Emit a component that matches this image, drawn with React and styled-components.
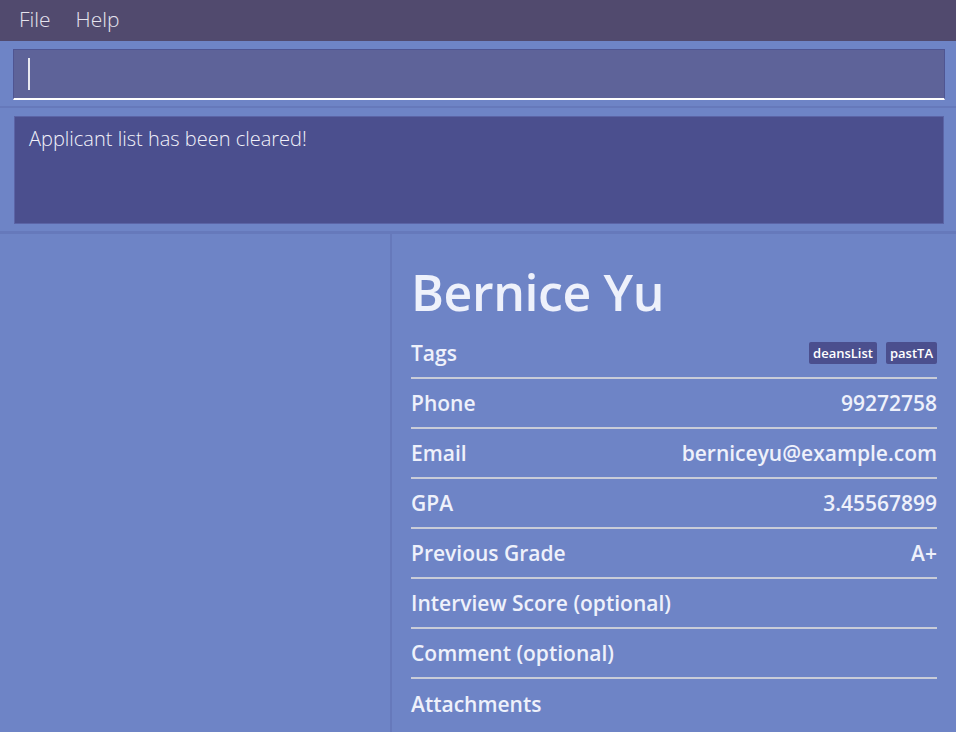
import React from "react";
import styled, { createGlobalStyle } from "styled-components";

const GlobalStyle = createGlobalStyle`
  html, body {
    margin: 0;
    padding: 0;
    background: #6e84c6;
    overflow: hidden;
  }
  * {
    box-sizing: border-box;
  }
`;

const fields = [
  { label: "Phone", value: "99272758" },
  { label: "Email", value: "berniceyu@example.com" },
  { label: "GPA", value: "3.45567899" },
  { label: "Previous Grade", value: "A+" },
  { label: "Interview Score (optional)", value: "" },
  { label: "Comment (optional)", value: "" },
  { label: "Attachments", value: "", last: true },
];

const tags = ["deansList", "pastTA"];

export default function App() {
  return (
    <>
      <GlobalStyle />
      <Window>
        <MenuBar>
          <MenuItem>File</MenuItem>
          <MenuItem>Help</MenuItem>
        </MenuBar>

        <CommandSection>
          <CommandBox>
            <Caret />
          </CommandBox>
        </CommandSection>

        <ResultSection>
          <ResultBox>Applicant list has been cleared!</ResultBox>
        </ResultSection>

        <Main>
          <ListPanel />
          <Divider />
          <DetailPanel>
            <Name>Bernice Yu</Name>
            <Row>
              <Label>Tags</Label>
              <TagList>
                {tags.map((t) => (
                  <Tag key={t}>{t}</Tag>
                ))}
              </TagList>
            </Row>
            {fields.map((f) => (
              <Row key={f.label} last={f.last}>
                <Label>{f.label}</Label>
                <Value>{f.value}</Value>
              </Row>
            ))}
          </DetailPanel>
        </Main>
      </Window>
    </>
  );
}

const Window = styled.div`
  width: 956px;
  height: 732px;
  display: flex;
  flex-direction: column;
  background: #6e84c6;
  font-family: "Open Sans", "Noto Sans", sans-serif;
  color: #eef1fb;
`;

const MenuBar = styled.div`
  height: 41px;
  flex-shrink: 0;
  background: #514a6e;
  display: flex;
  align-items: center;
  gap: 25px;
  padding: 0 0 3px 19px;
`;

const MenuItem = styled.span`
  font-size: 21px;
  font-weight: 300;
  color: #e6e4ee;
`;

const CommandSection = styled.div`
  padding: 8px 11px 6px 13px;
  border-bottom: 2px solid #6679bb;
`;

const CommandBox = styled.div`
  height: 51px;
  background: #5e6399;
  border: 1px solid #4f5592;
  border-bottom: 2px solid #ffffff;
  display: flex;
  align-items: center;
  padding-left: 14px;
`;

const Caret = styled.div`
  width: 2px;
  height: 32px;
  background: #e8e8f0;
`;

const ResultSection = styled.div`
  padding: 8px 12px 7px 14px;
  border-bottom: 3px solid #6679bb;
`;

const ResultBox = styled.div`
  height: 108px;
  background: #4b4f8e;
  border: 1px solid #5b64a6;
  padding: 8px 14px;
  font-size: 20px;
  font-weight: 300;
  color: #f2f2fa;
`;

const Main = styled.div`
  flex: 1;
  display: grid;
  grid-template-columns: 390px 2px 1fr;
  min-height: 0;
`;

const ListPanel = styled.div`
  background: #6e84c6;
`;

const Divider = styled.div`
  background: #6679bb;
`;

const DetailPanel = styled.div`
  padding: 22px 19px 0 19px;
  display: flex;
  flex-direction: column;
`;

const Name = styled.div`
  font-size: 50px;
  font-weight: 600;
  line-height: 73px;
  height: 73px;
  color: #eef1fb;
  letter-spacing: -0.4px;
`;

const Row = styled.div`
  height: 50px;
  flex-shrink: 0;
  display: flex;
  align-items: center;
  justify-content: space-between;
  border-bottom: ${(p) => (p.last ? "none" : "2px solid #c9ccd8")};
`;

const Label = styled.span`
  font-size: 21px;
  font-weight: 600;
`;

const Value = styled.span`
  font-size: 21px;
  font-weight: 600;
`;

const TagList = styled.div`
  display: flex;
  gap: 9px;
`;

const Tag = styled.span`
  background: #4b4f8e;
  color: #ffffff;
  font-size: 13px;
  font-weight: 600;
  padding: 2px 4px;
  border-radius: 2px;
  line-height: 18px;
`;
